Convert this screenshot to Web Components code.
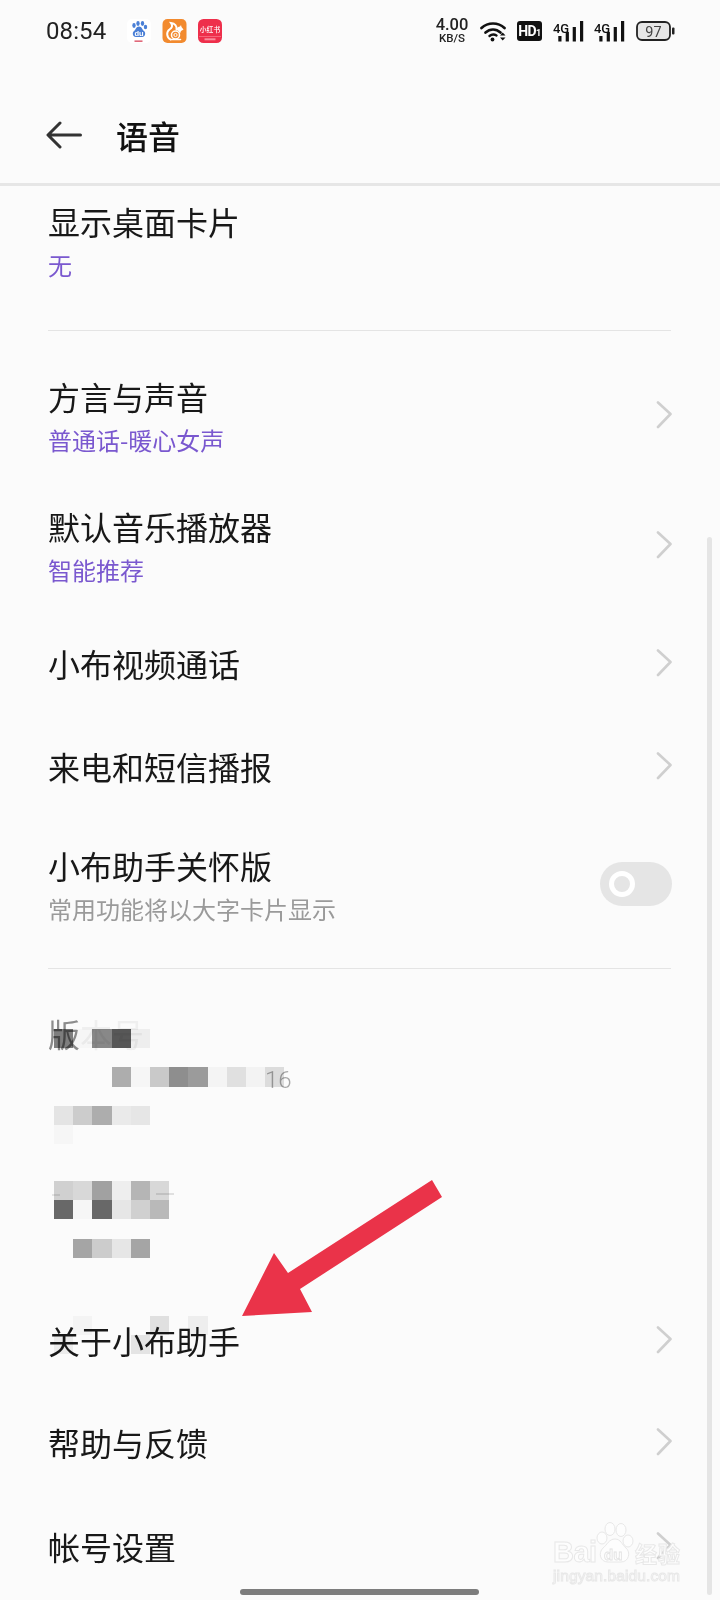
<!DOCTYPE html>
<html lang="zh-CN">
<head>
<meta charset="utf-8">
<title>语音</title>
<style>
    html, body { margin: 0; background: #fbfbfb; }
</style>
</head>
<body>
<page-shell>
    <status-bar></status-bar>
    <app-header label="语音"></app-header>

    <setting-row label="显示桌面卡片" sub="无" style="margin-top:13px"></setting-row>
    <section-rule style="margin-top:43px"></section-rule>

    <setting-row label="方言与声音" sub="普通话-暖心女声" trailing="chevron" style="margin-top:43px"></setting-row>
    <setting-row label="默认音乐播放器" sub="智能推荐" trailing="chevron" style="margin-top:42px"></setting-row>
    <setting-row label="小布视频通话" trailing="chevron" style="margin-top:49px"></setting-row>
    <setting-row label="来电和短信播报" trailing="chevron" style="margin-top:59px"></setting-row>
    <setting-row label="小布助手关怀版" sub="常用功能将以大字卡片显示" tone="muted" trailing="toggle" style="margin-top:55px"></setting-row>
    <section-rule style="margin-top:37px"></section-rule>

    <version-block style="margin-top:42px"></version-block>

    <setting-row label="关于小布助手" trailing="chevron" style="margin-top:216px"></setting-row>
    <setting-row label="帮助与反馈" trailing="chevron" style="margin-top:58px"></setting-row>
    <setting-row label="帐号设置" trailing="chevron" style="margin-top:60px"></setting-row>

    <!-- overlays: redaction blocks, annotation arrow, watermark, system bars -->
    <mosaic-patch style="left:54px;top:1029px" cells="80 fa 8a 58 f2;;-- -- -- b0 fa cc 90 9e f8 e4 f7 e0;;e8 d0 b0 ee ea;fa"></mosaic-patch>
    <mosaic-patch style="left:54px;top:1181px" cells="d4 dc a4 f2 b8 dc;6a fa 6a ea d4 bc;;-- a8 d0 ea a8"></mosaic-patch>
    <mosaic-patch style="left:54px;top:1316px" cells="-- f8 -- -- -- e4 -- f2;f0 -- -- -- e8"></mosaic-patch>
    <mosaic-patch style="left:156px;top:1193px;--cell-w:18px;--cell-h:2px" cells="e4"></mosaic-patch>
    <mosaic-patch style="left:52px;top:1194px;--cell-w:8px;--cell-h:2px" cells="e8"></mosaic-patch>
    <red-arrow></red-arrow>
    <baidu-mark></baidu-mark>
    <scroll-thumb></scroll-thumb>
    <home-bar></home-bar>
</page-shell>

<script>
const CJK = '"Noto Sans CJK SC", "Noto Sans", sans-serif';

class PageShell extends HTMLElement {
    constructor() {
        super();
        this.attachShadow({ mode: "open" });
    }

    connectedCallback() {
        this.shadowRoot.innerHTML = `
            <style>
                :host {
                    display: flex;
                    flex-direction: column;
                    position: relative;
                    width: 720px;
                    height: 1600px;
                    overflow: hidden;
                    background: #fbfbfb;
                    color: #181818;
                    font-family: ${CJK};
                }
            </style>
            <slot></slot>
        `;
    }
}

class StatusBar extends HTMLElement {
    constructor() {
        super();
        this.attachShadow({ mode: "open" });
    }

    signal() {
        return `
            <svg class="sig" width="31" height="21" viewBox="0 0 31 21">
                <text x="0" y="11.5" font-size="13" font-family="Roboto, sans-serif" font-weight="500" fill="#111" textLength="16">4G</text>
                <rect x="5.3" y="15" width="3.2" height="5.5" fill="#111"/>
                <rect x="12.7" y="11" width="3.2" height="9.5" fill="#111"/>
                <rect x="19.7" y="6" width="3.2" height="14.5" fill="#111"/>
                <rect x="27" y="0" width="3.2" height="20.5" fill="#111"/>
            </svg>`;
    }

    connectedCallback() {
        this.shadowRoot.innerHTML = `
            <style>
                :host {
                    display: flex;
                    align-items: center;
                    flex: none;
                    height: 62px;
                    padding-left: 46px;
                    font-family: Roboto, sans-serif;
                    color: #222;
                }
                .time { font-size: 24px; width: 81px; letter-spacing: 0.1px; }
                .app { display: block; width: 24px; height: 24px; margin-right: 11px; }
                .speed { margin-left: 212px; width: 36px; text-align: center; line-height: 1; white-space: nowrap; }
                .speed b { display: block; font-size: 16.5px; font-weight: 500; line-height: 14px; }
                .speed span { display: block; font-size: 11.5px; font-weight: 500; line-height: 12px; }
                .wifi { margin-left: 10px; }
                .hd {
                    margin-left: 10px;
                    width: 25px;
                    height: 20px;
                    border-radius: 3px;
                    background: #111;
                    color: #fff;
                    font-size: 14px;
                    font-weight: 700;
                    line-height: 20px;
                    text-align: center;
                    letter-spacing: -0.6px;
                }
                .hd small { font-size: 9px; }
                .sig { margin-left: 11px; }
                .sig + .sig { margin-left: 10px; }
                .battery { margin-left: 11px; }
            </style>
            <span class="time">08:54</span>
            <svg class="app" viewBox="0 0 24 24">
                <rect width="24" height="24" rx="5" fill="#fff"/>
                <ellipse cx="7" cy="6.500" rx="1.700" ry="2.400" fill="#4a7fd6"/>
                <ellipse cx="11" cy="4.500" rx="1.700" ry="2.400" fill="#4a7fd6"/>
                <ellipse cx="15.500" cy="4.500" rx="1.700" ry="2.400" fill="#4a7fd6"/>
                <ellipse cx="18.500" cy="8" rx="1.700" ry="2.300" fill="#4a7fd6"/>
                <path d="M12 7.500c3 0 3 3 5 4.500 2 1.600 1.500 6-2 6H9c-3.500 0-4-4.400-2-6 2-1.500 2-4.500 5-4.500z" fill="#4a7fd6"/>
                <text x="12" y="16.500" text-anchor="middle" font-size="7.500" font-family="Liberation Sans, sans-serif" font-weight="700" fill="#fff">du</text>
                <rect x="7.500" y="21.500" width="8" height="1.300" fill="#d9455a"/>
            </svg>
            <svg class="app" viewBox="0 0 24 24" style="width:25px">
                <rect width="24" height="24" rx="5" fill="#f28a2e"/>
                <path d="M8 20.500C3.500 18 4 12.500 7 10.500c2.500-1.500 3.500-3.500 1.500-6.500 4 .500 6 3 5.500 6.500" fill="none" stroke="#fff" stroke-width="2" stroke-linecap="round"/>
                <circle cx="13" cy="16" r="4" fill="none" stroke="#fff" stroke-width="1.500"/>
                <circle cx="13" cy="16" r="1.600" fill="none" stroke="#fff" stroke-width="1"/>
                <path d="M14 10.500c.500-2 2-3 3.500-3l1-1.500.500 2 2 2.500-2.500 1.500-1 2.500c-1-2-2.200-3.300-3.500-4z" fill="#fff"/>
                <path d="M8 20.500h10" stroke="#fff" stroke-width="1.500" stroke-linecap="round"/>
            </svg>
            <svg class="app" viewBox="0 0 24 24" style="margin-right:0">
                <rect width="24" height="24" rx="5.500" fill="#ee2f4b"/>
                <text x="12" y="12.500" text-anchor="middle" font-size="6.800" font-weight="500" font-family="Noto Sans CJK SC, sans-serif" fill="#fff">小红书</text>
                <rect x="1" y="17" width="22" height=".500" fill="#ff9dab"/>
                <rect x="6.500" y="19.300" width="11" height="2" fill="#f98c9c"/>
            </svg>
            <span class="speed"><b>4.00</b><span>KB/S</span></span>
            <svg class="wifi" width="27" height="21" viewBox="0 0 27 21" fill="none" stroke="#111" stroke-linecap="round">
                <path d="M1.500 7C8 1 18 1 24.500 7" stroke-width="2.700"/>
                <path d="M5.500 11.500c4.500-4 10.500-4 15 0" stroke-width="2.700"/>
                <path d="M9.500 15c2.500-2 4.500-2 7-.500" stroke-width="2.400"/>
                <circle cx="12.500" cy="18.500" r="1.900" fill="#111" stroke="none"/>
                <path d="M20 14.500h5.500L22.700 11.500zM20 16.500h5.500L22.700 19.500z" fill="#111" stroke="none"/>
            </svg>
            <span class="hd">HD<small>1</small></span>
            ${this.signal()}
            ${this.signal()}
            <svg class="battery" width="39" height="20" viewBox="0 0 39 20">
                <rect x="1" y="1" width="33" height="18" rx="5" fill="#e6e6e6" stroke="#222" stroke-width="1.800"/>
                <text x="17.500" y="15.500" text-anchor="middle" font-size="14.500" font-family="Roboto, sans-serif" fill="#444">97</text>
                <rect x="36" y="6.500" width="2.500" height="7" rx="1" fill="#222"/>
            </svg>
        `;
    }
}

class AppHeader extends HTMLElement {
    constructor() {
        super();
        this.attachShadow({ mode: "open" });
    }

    connectedCallback() {
        this.shadowRoot.innerHTML = `
            <style>
                :host {
                    display: flex;
                    align-items: center;
                    flex: none;
                    box-sizing: border-box;
                    height: 124px;
                    padding: 25px 0 0 46px;
                    border-bottom: 3px solid #e6e6e6;
                }
                svg { display: block; }
                h1 {
                    margin: 0 0 0 34px;
                    font-size: 32px;
                    font-weight: 500;
                    line-height: 44px;
                    color: #111;
                }
            </style>
            <svg width="36" height="28" viewBox="0 0 36 28" fill="none" stroke="#333" stroke-width="3" stroke-linecap="round" stroke-linejoin="round">
                <path d="M14 2 2 14l12 12M2.500 14h32"/>
            </svg>
            <h1>${this.getAttribute("label")}</h1>
        `;
    }
}

class SettingRow extends HTMLElement {
    constructor() {
        super();
        this.attachShadow({ mode: "open" });
    }

    connectedCallback() {
        this.render();
    }

    trailingMarkup() {
        const kind = this.getAttribute("trailing");
        if (kind === "chevron") {
            return `<svg class="chev" width="16" height="28" viewBox="0 0 16 28" fill="none" stroke="#cfcfcf" stroke-width="2.600" stroke-linecap="round" stroke-linejoin="round"><path d="M2 1.500 14.500 13 2 26"/></svg>`;
        }
        if (kind === "toggle") {
            return `<span class="toggle"><i></i></span>`;
        }
        return "";
    }

    render() {
        const sub = this.getAttribute("sub");
        this.shadowRoot.innerHTML = `
            <style>
                :host {
                    display: flex;
                    align-items: center;
                    justify-content: space-between;
                    flex: none;
                    padding: 0 48px;
                }
                .label { font-size: 32px; line-height: 44px; color: #181818; }
                .sub { font-size: 24px; line-height: 44px; color: #7a58cf; }
                :host([tone="muted"]) .sub { color: #9a9a9a; }
                .chev { display: block; }
                :host([sub]) .chev { margin-top: -6px; }
                .toggle {
                    display: flex;
                    align-items: center;
                    box-sizing: border-box;
                    width: 72px;
                    height: 44px;
                    padding-left: 9px;
                    border-radius: 22px;
                    background: #e5e5e5;
                    margin-top: -6px;
                }
                .toggle i {
                    box-sizing: border-box;
                    width: 26px;
                    height: 26px;
                    border-radius: 50%;
                    border: 5px solid #fff;
                }
            </style>
            <div>
                <div class="label">${this.getAttribute("label")}</div>
                ${sub ? `<div class="sub">${sub}</div>` : ""}
            </div>
            ${this.trailingMarkup()}
        `;
    }
}

class SectionRule extends HTMLElement {
    constructor() {
        super();
        this.attachShadow({ mode: "open" });
    }

    connectedCallback() {
        this.shadowRoot.innerHTML = `
            <style>
                :host { display: block; flex: none; height: 1px; margin-left: 48px; margin-right: 49px; background: #e4e4e4; }
            </style>
        `;
    }
}

class VersionBlock extends HTMLElement {
    constructor() {
        super();
        this.attachShadow({ mode: "open" });
    }

    connectedCallback() {
        this.shadowRoot.innerHTML = `
            <style>
                :host { display: block; flex: none; padding-left: 48px; }
                .label { font-size: 32px; line-height: 44px; color: #8c8c8c; }
                .label span + span { color: #efefef; }
                .num { font-family: Roboto, sans-serif; font-weight: 300; font-size: 24px; line-height: 44px; margin-top: 3px; padding-left: 217px; color: #a8a8a8; }
            </style>
            <div class="label"><span>版</span><span>本号</span></div>
            <div class="num">16</div>
        `;
    }
}

class MosaicPatch extends HTMLElement {
    constructor() {
        super();
        this.attachShadow({ mode: "open" });
    }

    connectedCallback() {
        const rows = this.getAttribute("cells").split(";");
        const html = rows.map((row) => {
            const cells = row.trim() ? row.trim().split(" ") : [];
            return `<div class="row">${cells.map((c) => c === "--" ? "<i></i>" : `<i style="background:#${c}${c}${c}"></i>`).join("")}</div>`;
        }).join("");
        this.shadowRoot.innerHTML = `
            <style>
                :host { display: block; position: absolute; mix-blend-mode: multiply; }
                .row { display: flex; height: var(--cell-h, 19.2px); }
                i { display: block; flex: none; width: var(--cell-w, 19.2px); height: 100%; }
            </style>
            ${html}
        `;
    }
}

class RedArrow extends HTMLElement {
    constructor() {
        super();
        this.attachShadow({ mode: "open" });
    }

    connectedCallback() {
        this.shadowRoot.innerHTML = `
            <style>
                :host { display: block; position: absolute; left: 240px; top: 1178px; width: 204px; height: 140px; }
                svg { display: block; }
            </style>
            <svg width="204" height="140" viewBox="240 1178 204 140">
                <path d="M432 1180 442 1197 300 1289 312 1312 242 1316 274 1253 288 1273z" fill="#ea3349"/>
            </svg>
        `;
    }
}

class BaiduMark extends HTMLElement {
    constructor() {
        super();
        this.attachShadow({ mode: "open" });
    }

    connectedCallback() {
        this.shadowRoot.innerHTML = `
            <style>
                :host { display: block; position: absolute; left: 550px; top: 1518px; width: 136px; height: 70px; }
                svg { display: block; }
            </style>
            <svg width="136" height="70" viewBox="550 1518 136 70" fill="#fdfdfd" stroke="#e8e8e8" stroke-width="1">
                <text x="553" y="1562" font-family="Liberation Sans, sans-serif" font-weight="700" font-size="29" textLength="44">Bai</text>
                <ellipse cx="602" cy="1538" rx="5" ry="6"/>
                <ellipse cx="610" cy="1529" rx="5" ry="6.500"/>
                <ellipse cx="621" cy="1530" rx="5" ry="6.500"/>
                <ellipse cx="628" cy="1541" rx="5" ry="6"/>
                <path d="M615 1539c6 0 7 6 11 9 5 4 3 14-5 14h-13c-8 0-10-9-5-14 4-3 6-9 12-9z"/>
                <text x="604" y="1560" font-family="Liberation Sans, sans-serif" font-weight="700" font-size="15" stroke="#e2e2e2" stroke-width=".8">du</text>
                <text x="635" y="1562" font-family="Noto Sans CJK SC, sans-serif" font-weight="700" font-size="22" textLength="45">经验</text>
                <text x="553" y="1581" font-family="Liberation Sans, sans-serif" font-size="15.500" textLength="127">jingyan.baidu.com</text>
            </svg>
        `;
    }
}

class ScrollThumb extends HTMLElement {
    constructor() {
        super();
        this.attachShadow({ mode: "open" });
    }

    connectedCallback() {
        this.shadowRoot.innerHTML = `
            <style>
                :host { display: block; position: absolute; left: 707px; top: 537px; width: 5px; height: 1058px; border-radius: 3px; background: #e5e5e5; }
            </style>
        `;
    }
}

class HomeBar extends HTMLElement {
    constructor() {
        super();
        this.attachShadow({ mode: "open" });
    }

    connectedCallback() {
        this.shadowRoot.innerHTML = `
            <style>
                :host { display: block; position: absolute; left: 240px; top: 1589px; width: 239px; height: 6px; border-radius: 3px; background: #7d7d7d; }
            </style>
        `;
    }
}

customElements.define("page-shell", PageShell);
customElements.define("status-bar", StatusBar);
customElements.define("app-header", AppHeader);
customElements.define("setting-row", SettingRow);
customElements.define("section-rule", SectionRule);
customElements.define("version-block", VersionBlock);
customElements.define("mosaic-patch", MosaicPatch);
customElements.define("red-arrow", RedArrow);
customElements.define("baidu-mark", BaiduMark);
customElements.define("scroll-thumb", ScrollThumb);
customElements.define("home-bar", HomeBar);
</script>
</body>
</html>
